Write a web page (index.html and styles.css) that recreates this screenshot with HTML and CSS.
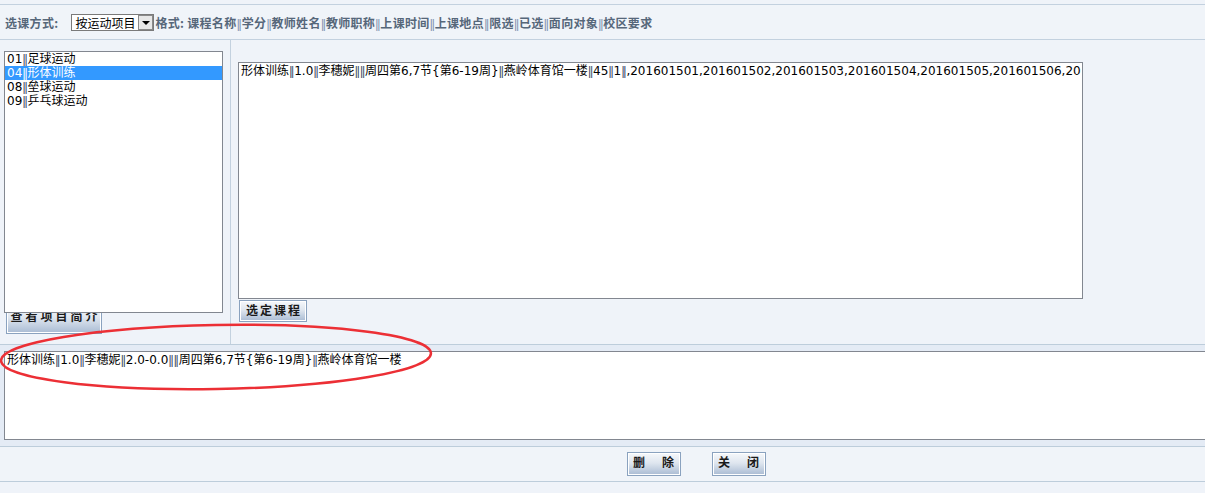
FILE: index.html
```html
<!DOCTYPE html>
<html lang="zh-CN">
<head>
    <meta charset="UTF-8">
    <title>选课</title>
    <link rel="stylesheet" href="styles.css">
</head>
<body>

    <div class="toolbar">
        <span class="label">选课方式:</span>
        <span class="select">按运动项目<span class="arrow"></span></span>
        <span class="label">格式: 课程名称<span class="sep">||</span>学分<span class="sep">||</span>教师姓名<span class="sep">||</span>教师职称<span class="sep">||</span>上课时间<span class="sep">||</span>上课地点<span class="sep">||</span>限选<span class="sep">||</span>已选<span class="sep">||</span>面向对象<span class="sep">||</span>校区要求</span>
    </div>

    <div class="main">
        <div class="left">
            <div class="listbox">
                <div class="opt">01<span class="sep">||</span>足球运动</div>
                <div class="opt selected">04<span class="sep">||</span>形体训练</div>
                <div class="opt">08<span class="sep">||</span>垒球运动</div>
                <div class="opt">09<span class="sep">||</span>乒乓球运动</div>
            </div>
            <button class="btn btn-intro">查看项目简介</button>
        </div>
        <div class="right">
            <div class="courses">
                <div class="opt">形体训练<span class="sep">||</span>1.0<span class="sep">||</span>李穗妮<span class="sep">||</span><span class="sep">||</span>周四第6,7节{第6-19周}<span class="sep">||</span>燕岭体育馆一楼<span class="sep">||</span>45<span class="sep">||</span>1<span class="sep">||</span>,201601501,201601502,201601503,201601504,201601505,201601506,20</div>
            </div>
            <button class="btn btn-pick">选定课程</button>
        </div>
    </div>

    <div class="band">
        <div class="chosen">
            <div class="opt">形体训练<span class="sep">||</span>1.0<span class="sep">||</span>李穗妮<span class="sep">||</span>2.0-0.0<span class="sep">||</span><span class="sep">||</span>周四第6,7节{第6-19周}<span class="sep">||</span>燕岭体育馆一楼</div>
        </div>
    </div>

    <div class="actions">
        <button class="btn btn-act"><span class="gap">删</span>除</button>
        <button class="btn btn-act"><span class="gap">关</span>闭</button>
    </div>

    <svg class="mark" width="440" height="80" viewBox="0 0 440 80">
        <ellipse cx="216" cy="37" rx="215" ry="32" transform="rotate(-1 216 37)" fill="none" stroke="#ec2f35" stroke-width="2.5"/>
    </svg>

</body>
</html>
```

FILE: styles.css
```css
body {
    margin: 0;
    background: #eff3f9;
    font-family: "DejaVu Sans", "Noto Sans CJK SC", sans-serif;
    font-size: 12px;
    color: #000;
    position: relative;
    overflow: hidden;
    height: 493px;
}
.toolbar {
    margin-top: 4px;
    height: 34px;
    border-top: 1px solid #c3d1df;
    border-bottom: 1px solid #c3d1df;
    background: #f0f4f9;
    display: flex;
    align-items: center;
    padding-left: 5px;
}
.label {
    color: #56677a;
    font-family: "Noto Sans CJK SC", sans-serif;
    font-weight: bold;
    font-size: 12px;
    letter-spacing: 0.3px;
}
/* the double bar between fields */
.sep {
    font-family: "Liberation Sans", sans-serif;
    font-weight: normal;
    letter-spacing: -1.2px;
    margin: 0 1.2px 0 0.2px;
    color: #3a4a66;
}
.label .sep {
    color: #7f93b0;
}
.select {
    display: inline-flex;
    align-items: center;
    height: 15px;
    margin: 0 1px 0 13px;
    padding-left: 3px;
    border: 1px solid #7a7a7a;
    background: #fff;
    font-family: "Noto Sans CJK SC", sans-serif;
    font-size: 12px;
}
.arrow {
    width: 13px;
    height: 13px;
    margin-left: 3px;
    border: 1px solid #8a8a8a;
    background: #e8e8e8;
    position: relative;
}
.arrow::after {
    content: "";
    position: absolute;
    left: 3px;
    top: 5px;
    border-left: 4px solid transparent;
    border-right: 4px solid transparent;
    border-top: 4px solid #000;
}
.main {
    display: flex;
    height: 304px;
}
.left {
    width: 231px;
    border-right: 1px solid #c3d1df;
    padding: 11px 0 0 4px;
    box-sizing: border-box;
}
.listbox {
    position: relative;
    z-index: 1;
    width: 217px;
    height: 260px;
    border: 1px solid #828790;
    background: #fff;
}
.opt {
    height: 14px;
    line-height: 14px;
    padding-left: 2px;
    white-space: nowrap;
    overflow: hidden;
}
.selected {
    background: #3399ff;
    color: #fff;
}
.selected .sep {
    color: #fff;
}
.btn {
    font-family: "Noto Sans CJK SC", sans-serif;
    font-size: 12px;
    font-weight: bold;
    color: #1a1a1a;
    white-space: nowrap;
    border: 1px solid #8aa2bf;
    background: linear-gradient(#f6f8fb, #dfe6ef 45%, #a9bbd3);
    box-shadow: inset 0 0 0 1px #fff;
    padding: 0;
    cursor: pointer;
}
.btn-intro {
    display: block;
    width: 96px;
    height: 30px;
    margin: -9px 0 0 2px;
    letter-spacing: 3px;
    padding: 0 0 8px 3px;
}
.right {
    flex: 1;
    padding: 22px 0 0 7px;
}
.courses {
    width: 843px;
    height: 234px;
    border: 1px solid #828790;
    background: #fff;
    padding-top: 1px;
    overflow: hidden;
}
.btn-pick {
    display: block;
    width: 68px;
    height: 22px;
    margin: 1px 0 0 1px;
    letter-spacing: 2px;
    padding: 0 0 11px 2px;
}
.band {
    border-top: 1px solid #bdcddb;
    border-bottom: 1px solid #bdcddb;
    background: #e4ebf5;
    padding: 6px 0 6px 4px;
}
.chosen {
    height: 86px;
    border: 1px solid #828790;
    border-right: none;
    background: #fff;
    padding-top: 1px;
}
.actions {
    height: 34px;
    background: #f0f4f9;
    border-bottom: 1px solid #bdcddb;
    display: flex;
    align-items: center;
    justify-content: center;
    gap: 31px;
    padding-left: 188px;
}
.btn-act {
    width: 54px;
    height: 24px;
    text-align: left;
    padding: 0 0 7px 5px;
}
.gap {
    margin-right: 17px;
}
.mark {
    position: absolute;
    left: 0;
    top: 320px;
    z-index: 2;
}
```
